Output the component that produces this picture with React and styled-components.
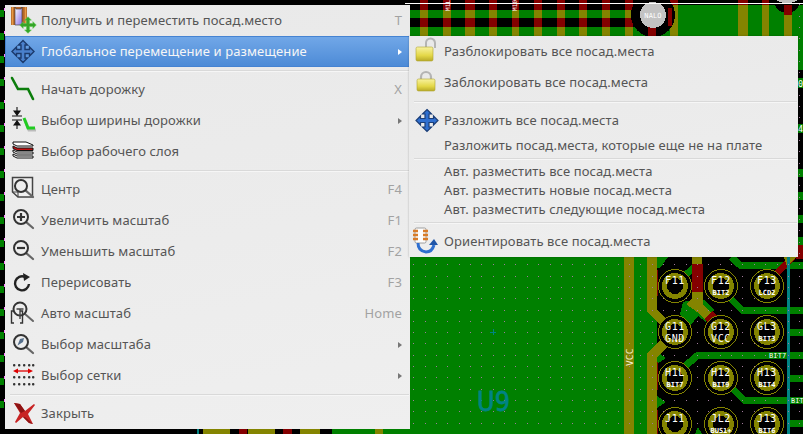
import React from "react";
import styled, { createGlobalStyle } from "styled-components";

const Global = createGlobalStyle`
  html, body { margin: 0; padding: 0; background: #000; overflow: hidden; }
`;

const DARK_RED = "#840000";
const OLIVE = "#848400";
const GREEN = "#008000";
const TEAL = "#008484";

// ---- the pcb behind the menus ----

const stripes = [
  [420, 8], [443, 8], [465, 10], [489, 8], [512, 7], [534, 8], [557, 8], [579, 8], [602, 8], [625, 8],
];

const copperBands = [
  [10, 8],
  [27, 9],
];

const pads = [
  { x: 675, y: 286, top: "F11" },
  { x: 721, y: 286, top: "F12", bottom: "BIT2" },
  { x: 767, y: 286, top: "F13", bottom: "LCD2" },
  { x: 675, y: 332, top: "G11", bottom: "GND" },
  { x: 721, y: 332, top: "G12", bottom: "VCC" },
  { x: 767, y: 332, top: "GL3", bottom: "BIT3" },
  { x: 675, y: 378, top: "H1L", bottom: "BIT7" },
  { x: 721, y: 378, top: "H12", bottom: "BIT9" },
  { x: 767, y: 378, top: "H13", bottom: "BIT4" },
  { x: 675, y: 424, top: "J11" },
  { x: 721, y: 424, top: "JL2", bottom: "BUS1+" },
  { x: 767, y: 424, top: "J13", bottom: "BIT6" },
];

const traces = [
  "M731 257 L740 265 H803",
  "M729 297 L742 310 H803",
  "M787 332 H803",
  "M683 368 L698 355 H803",
  "M787 378 H803",
  "M732 388 L744 400 H803",
  "M787 423 H803",
  "M683 277 L695 267",
];

function gridDots() {
  const dots = [];
  for (let i = -1; i < 35; i++) {
    for (let j = -24; j < 15; j++) {
      const x = Math.round(413.3 + i * 11.35);
      const y = Math.round(264.3 + j * 11.3);
      if (y < 0 || (y < 257 && x < 798)) continue;
      dots.push(<rect key={`${i}-${j}`} x={x} y={y} width="1" height="1" fill="#a07a9c" />);
    }
  }
  return dots;
}

function Pcb() {
  return (
    <BoardSvg viewBox="0 0 803 434" width="803" height="434">
      <rect width="803" height="434" fill="#000" />
      {/* top copper */}
      <rect x="672" y="5" width="131" height="65" fill={GREEN} />
      {copperBands.map(([y, h]) => (
        <rect key={y} x="405" y={y} width="268" height={h} fill={GREEN} />
      ))}
      {stripes.map(([x, w]) => (
        <g key={x}>
          <rect x={x} y="0" width={w} height="36" fill={DARK_RED} />
          <rect x={x} y="10" width={w} height="8" fill={OLIVE} />
          <rect x={x} y="27" width={w} height="9" fill={OLIVE} />
        </g>
      ))}
      <rect x="670" y="0" width="8" height="5" fill={DARK_RED} />
      <rect x="670" y="5" width="8" height="31" fill={OLIVE} />
      <rect x="738" y="0" width="10" height="5" fill={DARK_RED} />
      <rect x="738" y="5" width="10" height="31" fill={OLIVE} />
      <rect x="762" y="0" width="7" height="5" fill={DARK_RED} />
      <rect x="762" y="5" width="7" height="31" fill={OLIVE} />
      <circle cx="653" cy="15" r="22" fill="#000" />
      <rect x="648" y="25" width="8" height="11" fill={DARK_RED} />
      <rect x="668" y="8" width="4" height="18" fill={DARK_RED} />
      <circle cx="653" cy="15" r="13" fill="#c2c2c2" />
      <PcbLabel x="653" y="18" fontSize="7" textAnchor="middle">NALO</PcbLabel>
      <circle cx="787" cy="0" r="13" fill="#000" />
      <rect x="784" y="5" width="8" height="10" fill={DARK_RED} />
      <rect x="784" y="15" width="8" height="21" fill={OLIVE} />
      <ellipse cx="787" cy="0" rx="10" ry="3" fill="#c2c2c2" />
      <rect x="405" y="3" width="398" height="1" fill="#fff" />
      <PcbLabel x="0" y="0" fontSize="6" transform="translate(450 11) rotate(-90)">M1L</PcbLabel>
      <PcbLabel x="0" y="0" fontSize="6" transform="translate(517 11) rotate(-90)">M10</PcbLabel>

      {/* left and right edges that peek out */}
      {[10, 33, 56, 79, 102, 125, 148, 171, 194, 217, 240, 263, 286, 309, 332, 355, 378, 401].map((y) => (
        <g key={y}>
          <rect x="0" y={y} width="4" height="7" fill={GREEN} />
          <rect x="4" y={y - 2} width="1" height="3" fill="#ff80ff" />
        </g>
      ))}
      <rect x="798" y="78" width="5" height="10" fill={GREEN} />
      <PcbLabel x="798" y="87" fontSize="8.5">0</PcbLabel>
      <rect x="798" y="124" width="5" height="9" fill={GREEN} />
      <PcbLabel x="798" y="132" fontSize="8.5">4</PcbLabel>
      {[169, 192, 215, 237].map((y) => (
        <rect key={y} x="798" y={y} width="5" height="8" fill={GREEN} />
      ))}
      <rect x="796" y="245" width="7" height="14" fill={DARK_RED} />

      {/* bottom edge under the main menu */}
      <rect x="197" y="429" width="2" height="5" fill={TEAL} />
      <rect x="203" y="429" width="27" height="5" fill={OLIVE} />
      <rect x="239" y="429" width="8" height="5" fill={DARK_RED} />
      <rect x="248" y="429" width="27" height="5" fill={OLIVE} />
      <rect x="283" y="429" width="9" height="5" fill={DARK_RED} />
      <rect x="300" y="429" width="20" height="5" fill={OLIVE} />
      <rect x="332" y="429" width="78" height="5" fill={GREEN} />
      <rect x="375" y="429" width="8" height="5" fill={OLIVE} />

      {/* lower copper pour */}
      <rect x="405" y="257" width="252" height="177" fill={GREEN} />
      <path d="M657 257 H668 L660 268 H657 Z" fill={GREEN} />
      <path d="M683 302 L692 300 H704 L714 310 L706 322 L698 316 L690 326 L680 314 Z" fill={GREEN} />
      <path d="M657 352 L666 358 L657 364 Z" fill={GREEN} />
      <path d="M657 396 L666 402 L657 408 Z" fill={GREEN} />
      <path d="M695 434 L698 427 L702 434 Z" fill={GREEN} />
      {traces.map((d) => (
        <path key={d} d={d} fill="none" stroke={GREEN} strokeWidth="7" />
      ))}
      <path d="M654 270 V296 M654 362 V390 M654 410 V434" stroke={DARK_RED} strokeWidth="7" fill="none" />

      {/* vias tracks */}
      <rect x="624" y="257" width="10" height="177" fill={OLIVE} />
      <path d="M647 257 V312 L668 332 L647 353 V434 H657 V357 L680 335 L657 309 V257 Z" fill={OLIVE} />
      <rect x="692" y="264" width="11" height="28" fill={DARK_RED} />
      <path d="M692 257 H702 V264 H692 Z" fill={OLIVE} />
      <path d="M692 292 H703 V304 L716 318 L709 324 L697 312 L686 304 L692 298 Z" fill={OLIVE} />
      <path d="M704 319 L712 311 L718 317 L710 325 Z" fill={DARK_RED} />
      <path d="M773 277 L793 257" stroke={DARK_RED} strokeWidth="7" fill="none" />
      <path d="M784 257 H796 L787 266 Z" fill={OLIVE} />
      <rect x="787" y="257" width="3" height="177" fill={TEAL} />

      {gridDots()}

      {/* pads */}
      {pads.map((p) => (
        <g key={p.top}>
          <circle cx={p.x} cy={p.y} r="16.5" fill="#000" stroke={OLIVE} strokeWidth="1" />
          <circle cx={p.x} cy={p.y} r="13" fill={OLIVE} />
          <circle cx={p.x} cy={p.y} r="8" fill="#000" />
          <PadText x={p.x} y={p.y - 2} fontSize="10" textAnchor="middle">{p.top}</PadText>
          {p.bottom && (
            <PadText
              x={p.x}
              y={p.y + (p.bottom.length > 3 ? 9 : 10)}
              fontSize={p.bottom.length > 3 ? 7 : 10}
              textAnchor="middle"
              $small={p.bottom.length > 3}
            >
              {p.bottom}
            </PadText>
          )}
        </g>
      ))}
      <PcbLabel x="769" y="358" fontSize="7">BIT7</PcbLabel>
      <PcbLabel x="791" y="403" fontSize="6.8">BIT</PcbLabel>
      <PcbLabel x="0" y="0" fontSize="9.5" fill="#f0f0d0" transform="translate(633 366) rotate(-90)">VCC</PcbLabel>

      {/* footprint reference */}
      <path d="M490 332 H496 M493 329 V335" stroke={TEAL} strokeWidth="1" />
      <RefText x="477" y="411" textLength="33" lengthAdjust="spacingAndGlyphs">U9</RefText>
    </BoardSvg>
  );
}

// ---- icons ----

const ARROWS = "M0 -11 L4.5 -6.5 H2 V-2 H6.5 V-4.5 L11 0 L6.5 4.5 V2 H2 V6.5 H4.5 L0 11 L-4.5 6.5 H-2 V2 H-6.5 V4.5 L-11 0 L-6.5 -4.5 V-2 H-2 V-6.5 H-4.5 Z";

function Magnifier({ cx, cy, r = 7, children }) {
  return (
    <g fill="none">
      <path d={`M${cx + r * 0.7} ${cy + r * 0.7} L${cx + 12} ${cy + 11}`} stroke="#666" strokeWidth="2.2" strokeLinecap="round" />
      <circle cx={cx} cy={cy} r={r} stroke="#333" strokeWidth="2" fill="#eee" />
      {children}
    </g>
  );
}

const IconGet = () => (
  <Icon viewBox="0 0 30 31">
    <defs>
      <linearGradient id="fpBody" x1="0" x2="1" y1="0" y2="1">
        <stop offset="0" stopColor="#fff" />
        <stop offset="1" stopColor="#8a70e8" />
      </linearGradient>
    </defs>
    <rect x="5" y="2" width="16" height="18" fill="#b4662a" />
    <path d="M6.5 2v18M19.5 2v18" stroke="#e69a44" strokeWidth="1.5" />
    <path d="M9 2 L10 4 H15 L16 2 V20 H9 Z" fill="url(#fpBody)" stroke="#333" strokeWidth="0.6" />
    <path d={ARROWS} transform="translate(22 20) scale(.75)" fill="#35a528" stroke="#5fc850" strokeWidth="0.8" />
  </Icon>
);

const IconGlobalMove = () => (
  <Icon viewBox="0 0 30 31">
    <path d={ARROWS} transform="translate(17 15.5)" fill="#4a80cc" stroke="#1c3a6c" strokeWidth="1.4" />
  </Icon>
);

const IconRoute = () => (
  <Icon viewBox="0 0 30 31">
    <path d="M6 4 L12 15 H22 L27 25" fill="none" stroke="#0b7d0b" strokeWidth="2.6" strokeLinecap="round" />
  </Icon>
);

const IconWidth = () => (
  <Icon viewBox="0 0 30 31">
    <path d="M11 2 V6 M8 6 L11 10 L14 6 Z M6 11 H16 M6 15 H16 M8 20 L11 16 L14 20 Z M11 20 V24" stroke="#111" strokeWidth="1.1" fill="#111" />
    <path d="M19 15 L23 25 H30" fill="none" stroke="#bbb" strokeWidth="3" />
    <path d="M18 13 L22 23 H29" fill="none" stroke="#22cc22" strokeWidth="3" />
  </Icon>
);

const IconLayers = () => (
  <Icon viewBox="0 0 30 31">
    <path d="M7 18 L11 20 H27 V22 H11 L7 20 Z" fill="#fff" stroke="#111" strokeWidth="1" />
    <path d="M7 14 L11 16 H27 V18 H11 L7 16 Z" fill="#fff" stroke="#111" strokeWidth="1" />
    <path d="M7 10 L11 12 H27 V14.5 H11 L7 12.5 Z" fill="#c01010" stroke="#111" strokeWidth="1" />
    <path d="M7 6 H20 L27 9 V10 H11 L7 8 Z" fill="#fff" stroke="#111" strokeWidth="1" />
  </Icon>
);

const IconCenter = () => (
  <Icon viewBox="0 0 30 31">
    <path d="M6.5 3.5 H26.5 V23 H12 L6.5 18 Z" fill="#f0f0f0" stroke="#444" strokeWidth="1.5" />
    <path d="M6.5 18 L12 18 V23" fill="none" stroke="#444" strokeWidth="1.1" />
    <Magnifier cx={15} cy={12} r={6} />
  </Icon>
);

const IconZoomIn = () => (
  <Icon viewBox="0 0 30 31">
    <Magnifier cx={15} cy={12}>
      <path d="M11 12 H19 M15 8 V16" stroke="#333" strokeWidth="2.2" />
    </Magnifier>
  </Icon>
);

const IconZoomOut = () => (
  <Icon viewBox="0 0 30 31">
    <Magnifier cx={15} cy={12}>
      <path d="M11 12 H19" stroke="#333" strokeWidth="2.2" />
    </Magnifier>
  </Icon>
);

const IconRedraw = () => (
  <Icon viewBox="0 0 30 31">
    <path d="M23 17 A7 7 0 1 1 19 10" fill="none" stroke="#222" strokeWidth="2.4" />
    <path d="M17 6 L24 10 L18 14 Z" fill="#222" />
  </Icon>
);

const IconAutoZoom = () => (
  <Icon viewBox="0 0 30 31">
    <path d="M8 13 H5.5 V25 H8 M14 13 H16.5 V25 H14" fill="none" stroke="#333" strokeWidth="1.4" />
    <path d="M19 16 L27 23" stroke="#666" strokeWidth="2" strokeLinecap="round" />
    <circle cx="14" cy="11" r="6.5" fill="none" stroke="#333" strokeWidth="2" />
    <path d="M10.5 11 H17.5 M14 11 V21" stroke="#444" strokeWidth="1.4" />
  </Icon>
);

const IconZoomSelect = () => (
  <Icon viewBox="0 0 30 31">
    <Magnifier cx={15} cy={13}>
      <path d="M11.5 16.5 L14 10 L18 9 L17 13 Z" fill="#56708c" />
    </Magnifier>
  </Icon>
);

const IconGrid = () => (
  <Icon viewBox="0 0 30 31">
    {[5, 17, 24].map((y) =>
      [8, 13, 18, 23, 27].map((x) => (
        <rect key={`${x}-${y}`} x={x - 1} y={y - 1} width="2.4" height="2.4" rx="1" fill="#333" />
      ))
    )}
    <path d="M9 11 H25" stroke="#d00" strokeWidth="1.3" />
    <path d="M7 11 L12 8.5 V13.5 Z M27 11 L22 8.5 V13.5 Z" fill="#d00" />
  </Icon>
);

const IconClose = () => (
  <Icon viewBox="0 0 30 31">
    <path d="M8 5 L14 6 L19 13 L28 6 L29 7 L22 16 L27 26 L23 25 L17 19 L10 25 L9 24 L14 15 Z" fill="#c82424" />
    <path d="M19 19 L27 26 L23 25 L17 19 Z M8 5 L14 6 L19 13 L15 15 Z" fill="#8e1414" />
  </Icon>
);

const lockFill = (
  <defs>
    <linearGradient id="lockBody" x1="0" x2="0" y1="0" y2="1">
      <stop offset="0" stopColor="#f8f2a0" />
      <stop offset=".6" stopColor="#e4d848" />
      <stop offset="1" stopColor="#b8aa28" />
    </linearGradient>
  </defs>
);

const IconUnlock = () => (
  <Icon viewBox="0 0 30 31">
    {lockFill}
    <path d="M16 12 V7 A4.5 4.5 0 0 1 25 7 V12" fill="none" stroke="#b4b4b4" strokeWidth="2" />
    <rect x="6" y="11" width="17" height="14" rx="1.5" fill="url(#lockBody)" stroke="#b0a430" strokeWidth="0.6" />
  </Icon>
);

const IconLock = () => (
  <Icon viewBox="0 0 30 31">
    {lockFill}
    <path d="M11 13 V10 A5 5 0 0 1 21 10 V13" fill="none" stroke="#b4b4b4" strokeWidth="2.2" />
    <rect x="7" y="12" width="18" height="12" rx="1.5" fill="url(#lockBody)" stroke="#b0a430" strokeWidth="0.6" />
  </Icon>
);

const IconArrange = () => (
  <Icon viewBox="0 0 30 31">
    <path d={ARROWS} transform="translate(17 15.5)" fill="#2f6fd0" stroke="#1c3f78" strokeWidth="1.2" />
  </Icon>
);

const IconOrient = () => (
  <Icon viewBox="0 0 30 31">
    <rect x="5" y="2" width="11" height="15" rx="1.5" fill="#fdfdfd" stroke="#888" strokeWidth="0.8" />
    <path d="M3 5 H8 M3 9 H8 M3 13 H8 M13 5 H18 M13 9 H18 M13 13 H18" stroke="#d87c28" strokeWidth="2.4" />
    <path d="M8 17 Q8 25 16 26 Q22 26 24 19" fill="none" stroke="#2f6fd0" strokeWidth="3" />
    <path d="M19 19 H28 L24 13 Z" fill="#1f55a8" />
  </Icon>
);

// ---- menu data ----

const mainMenu = [
  { icon: <IconGet />, text: "Получить и переместить посад.место", key: "T" },
  { icon: <IconGlobalMove />, text: "Глобальное перемещение и размещение", sub: true, active: true },
  "sep",
  { icon: <IconRoute />, text: "Начать дорожку", key: "X" },
  { icon: <IconWidth />, text: "Выбор ширины дорожки", sub: true },
  { icon: <IconLayers />, text: "Выбор рабочего слоя" },
  "sep",
  { icon: <IconCenter />, text: "Центр", key: "F4" },
  { icon: <IconZoomIn />, text: "Увеличить масштаб", key: "F1" },
  { icon: <IconZoomOut />, text: "Уменьшить масштаб", key: "F2" },
  { icon: <IconRedraw />, text: "Перерисовать", key: "F3" },
  { icon: <IconAutoZoom />, text: "Авто масштаб", key: "Home" },
  { icon: <IconZoomSelect />, text: "Выбор масштаба", sub: true },
  { icon: <IconGrid />, text: "Выбор сетки", sub: true },
  "sep",
  { icon: <IconClose />, text: "Закрыть" },
];

const subMenu = [
  { icon: <IconUnlock />, text: "Разблокировать все посад.места" },
  { icon: <IconLock />, text: "Заблокировать все посад.места" },
  "sep",
  { icon: <IconArrange />, text: "Разложить все посад.места" },
  { text: "Разложить посад.места, которые еще не на плате" },
  "sep",
  { text: "Авт. разместить все посад.места" },
  { text: "Авт. разместить новые посад.места" },
  { text: "Авт. разместить следующие посад.места" },
  "sep",
  { icon: <IconOrient />, text: "Ориентировать все посад.места" },
];

function MenuRows({ items }) {
  return items.map((item, i) =>
    item === "sep" ? (
      <Separator key={i} />
    ) : (
      <Item key={i} $active={item.active} $compact={!item.icon}>
        <IconSlot>{item.icon}</IconSlot>
        <Label>{item.text}</Label>
        {item.key && <Shortcut>{item.key}</Shortcut>}
        {item.sub && <SubArrow $active={item.active} />}
      </Item>
    )
  );
}

export default function App() {
  return (
    <Stage>
      <Global />
      <Pcb />
      <MainMenu>
        <MenuRows items={mainMenu} />
      </MainMenu>
      <SideMenu>
        <MenuRows items={subMenu} />
      </SideMenu>
    </Stage>
  );
}

// ---- styles ----

const Stage = styled.div`
  position: relative;
  width: 803px;
  height: 434px;
  overflow: hidden;
  font-family: "Noto Sans", sans-serif;
  font-size: 13px;
  letter-spacing: 0.1px;
`;

const BoardSvg = styled.svg`
  position: absolute;
  inset: 0;
  display: block;
  shape-rendering: crispEdges;
`;

const PcbLabel = styled.text`
  font-family: "DejaVu Sans Mono", monospace;
  fill: ${(p) => p.fill || "#fff"};
`;

const PadText = styled(PcbLabel)`
  letter-spacing: ${(p) => (p.$small ? 0 : 0.6)}px;
  font-weight: ${(p) => (p.$small ? 700 : 400)};
`;

const RefText = styled.text`
  font-family: "DejaVu Sans", sans-serif;
  font-size: 27px;
  fill: ${TEAL};
  stroke: ${TEAL};
  stroke-width: 0.8px;
`;

const MenuPanel = styled.div`
  position: absolute;
  display: flex;
  flex-direction: column;
  box-sizing: border-box;
  background: linear-gradient(170deg, #e9e9e9 0%, #ececec 55%, #efefef 100%);
  color: #555;
`;

const MainMenu = styled(MenuPanel)`
  left: 5px;
  top: 5px;
  width: 405px;
  height: 424px;
`;

const IconSlot = styled.span`
  display: flex;
  flex: none;
  width: 36px;
  height: 31px;
  padding-left: 1px;
  box-sizing: border-box;
`;

const SideMenu = styled(MenuPanel)`
  left: 409px;
  top: 36px;
  width: 389px;
  height: 221px;
  box-shadow: 0 0 2px rgba(0, 0, 0, 0.25);
  ${IconSlot} {
    width: 35px;
  }
`;

const Item = styled.div`
  display: flex;
  align-items: center;
  height: ${(p) => (p.$compact ? 19 : 31)}px;
  flex: none;
  box-sizing: border-box;
  padding-right: 8px;
  white-space: nowrap;
  ${(p) =>
    p.$active &&
    `
    color: #f6f6f6;
    background: linear-gradient(#72a8e8, #4c8ad6);
    box-shadow: inset 0 0 0 1px #4583d2;
  `}
`;

const Icon = styled.svg`
  display: block;
  width: 30px;
  height: 31px;
  flex: none;
  overflow: visible;
`;

const Label = styled.span`
  flex: 1;
  padding-bottom: 2px;
`;

const Shortcut = styled.span`
  color: #a2a2a2;
  padding-bottom: 2px;
`;

const SubArrow = styled.i`
  width: 0;
  height: 0;
  border-left: 4px solid ${(p) => (p.$active ? "#fff" : "#777")};
  border-top: 3px solid transparent;
  border-bottom: 3px solid transparent;
`;

const Separator = styled.div`
  flex: none;
  height: 2px;
  margin: 2.5px 1px 2.5px 5px;
  background: linear-gradient(#d9d9d9 50%, #f6f6f6 50%);
`;
